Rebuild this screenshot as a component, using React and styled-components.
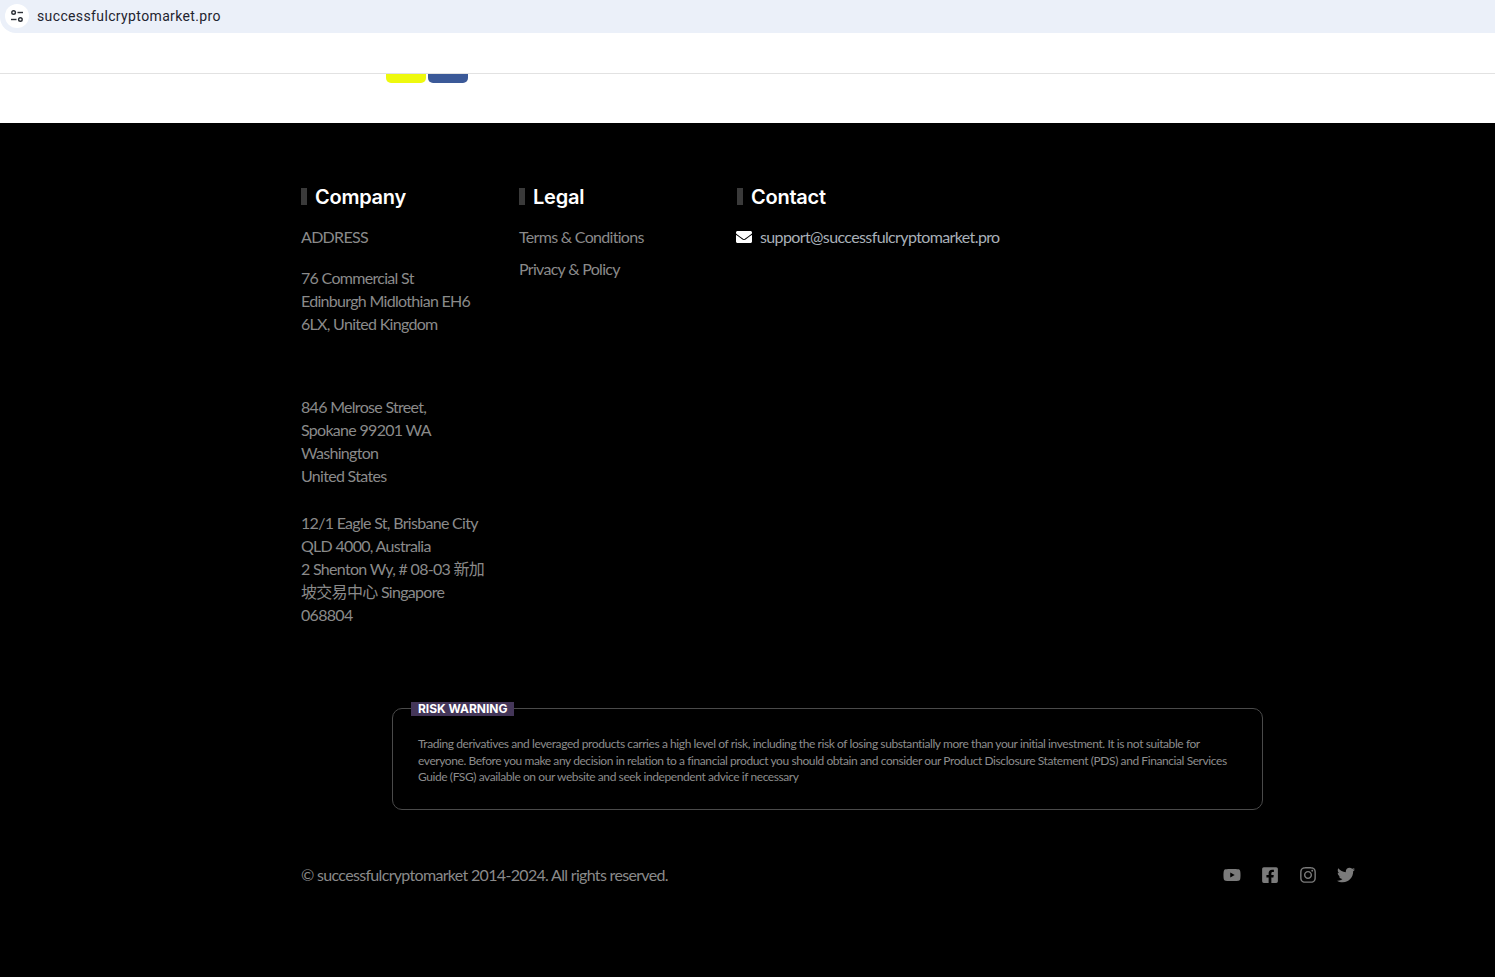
import styled, { createGlobalStyle } from "styled-components"
import { FaEnvelope, FaFacebookSquare, FaInstagram, FaTwitter, FaYoutube } from "react-icons/fa"

const GlobalStyle = createGlobalStyle`
  html, body {
    margin: 0;
    padding: 0;
    background: #fff;
  }
  * {
    box-sizing: border-box;
  }
`
const Page = styled.div`
  min-height: 977px;
  display: flex;
  flex-direction: column;
  font-family: "Lato", "Noto Sans CJK SC", sans-serif;
`
const AddressBar = styled.div`
  height: 33px;
  background: #ebf0f9;
  border-bottom-left-radius: 16px;
  display: flex;
  align-items: center;
  gap: 8px;
  padding: 0 0 2px 5px;
`
const SiteButton = styled.div`
  width: 24px;
  height: 24px;
  border-radius: 50%;
  background: #fff;
  display: flex;
  align-items: center;
  justify-content: center;
`
const Url = styled.span`
  font-family: "Roboto", "Liberation Sans", sans-serif;
  font-size: 14px;
  color: #1f2430;
  letter-spacing: 0.37px;
`
const Header = styled.div`
  height: 41px;
  background: #fff;
  border-bottom: 1px solid #e2e2e2;
`
const Strip = styled.div`
  height: 49px;
  background: #fff;
  display: flex;
  gap: 2px;
  padding-left: 386px;
`
const NavButton = styled.div`
  width: 40px;
  height: 9px;
  border-radius: 0 0 5px 5px;
  background: ${(p) => p.$color};
`
const Footer = styled.footer`
  flex: 1;
  background: #000;
  padding: 62px 0 0 301px;
  display: flex;
  flex-direction: column;
`
const Columns = styled.div`
  display: flex;
`
const Column = styled.div`
  width: 218px;
`
const Heading = styled.h4`
  margin: 0 0 16px;
  height: 24px;
  padding-left: 14px;
  display: flex;
  align-items: center;
  position: relative;
  font-family: "Inter", "Open Sans", sans-serif;
  font-size: 20px;
  font-weight: 600;
  letter-spacing: -0.25px;
  color: #fff;

  &::before {
    content: "";
    position: absolute;
    left: 0;
    top: 3px;
    width: 6px;
    height: 17px;
    background: #3a3a3a;
  }
`
const TextBlock = styled.p`
  margin: 0 0 ${(p) => p.$gap || 0}px;
  font-size: 16px;
  line-height: 23px;
  color: #8a8a8a;
  letter-spacing: -0.7px;
  white-space: nowrap;
`
const FooterLink = styled.a`
  display: block;
  margin-bottom: 9px;
  font-size: 16px;
  line-height: 23px;
  color: #8a8a8a;
  letter-spacing: -0.7px;
`
const MailRow = styled.div`
  display: flex;
  align-items: center;
  gap: 8px;
  height: 23px;
  margin-left: -1px;
  font-size: 16px;
  color: #a9b0b8;
  letter-spacing: -0.62px;
  white-space: nowrap;

  svg {
    flex-shrink: 0;
    color: #fff;
    font-size: 16px;
  }
`
const RiskBox = styled.div`
  position: relative;
  width: 871px;
  height: 102px;
  margin: 82px 0 0 91px;
  border: 1px solid #4a4a4a;
  border-radius: 10px;
  padding: 27px 25px 0;
  font-size: 12px;
  line-height: 16.5px;
  letter-spacing: -0.42px;
  color: #8c8c8c;
`
const RiskLabel = styled.span`
  position: absolute;
  left: 18px;
  top: -7px;
  height: 14px;
  padding: 0 7px;
  background: #443659;
  display: flex;
  align-items: center;
  font-family: "Inter", "Open Sans", sans-serif;
  font-size: 12px;
  font-weight: 700;
  letter-spacing: -0.02px;
  color: #fff;
`
const BottomRow = styled.div`
  margin-top: 53px;
  display: flex;
  align-items: center;
  justify-content: space-between;
  width: 1054px;
`
const Copyright = styled.span`
  font-size: 16px;
  line-height: 23px;
  letter-spacing: -0.68px;
  color: #8a8a8a;
`
const Socials = styled.div`
  display: flex;
  align-items: center;
  gap: 20px;

  svg {
    display: block;
    color: #7b7b7b;
    font-size: 18px;
  }
`

const App = () => {
  return (
    <Page>
      <GlobalStyle />
      <AddressBar>
        <SiteButton>
          <svg width="14" height="14" viewBox="0 0 14 14" fill="none" stroke="#2b2f36" strokeWidth="1.4">
            <circle cx="3.6" cy="3.5" r="1.8" />
            <path d="M7.5 3.5H13" />
            <path d="M1 10.5H6.5" />
            <circle cx="10.4" cy="10.5" r="1.8" />
          </svg>
        </SiteButton>
        <Url>successfulcryptomarket.pro</Url>
      </AddressBar>
      <Header />
      <Strip>
        <NavButton $color="#eef90e" />
        <NavButton $color="#3b5998" />
      </Strip>
      <Footer>
        <Columns>
          <Column>
            <Heading>Company</Heading>
            <TextBlock $gap={18}>ADDRESS</TextBlock>
            <TextBlock $gap={60}>
              76 Commercial St
              <br />
              Edinburgh Midlothian EH6
              <br />
              6LX, United Kingdom
            </TextBlock>
            <TextBlock $gap={24}>
              846 Melrose Street,
              <br />
              Spokane 99201 WA
              <br />
              Washington
              <br />
              United States
            </TextBlock>
            <TextBlock>
              12/1 Eagle St, Brisbane City
              <br />
              QLD 4000, Australia
              <br />
              2 Shenton Wy, # 08-03 新加
              <br />
              坡交易中心 Singapore
              <br />
              068804
            </TextBlock>
          </Column>
          <Column>
            <Heading>Legal</Heading>
            <FooterLink>Terms &amp; Conditions</FooterLink>
            <FooterLink>Privacy &amp; Policy</FooterLink>
          </Column>
          <Column>
            <Heading>Contact</Heading>
            <MailRow>
              <FaEnvelope />
              <span>support@successfulcryptomarket.pro</span>
            </MailRow>
          </Column>
        </Columns>
        <RiskBox>
          <RiskLabel>RISK WARNING</RiskLabel>
          Trading derivatives and leveraged products carries a high level of risk, including the risk of losing substantially more than your initial investment. It is not suitable for everyone. Before you make any decision in relation to a financial product you should obtain and consider our Product Disclosure Statement (PDS) and Financial Services Guide (FSG) available on our website and seek independent advice if necessary
        </RiskBox>
        <BottomRow>
          <Copyright>© successfulcryptomarket 2014-2024. All rights reserved.</Copyright>
          <Socials>
            <FaYoutube />
            <FaFacebookSquare />
            <FaInstagram />
            <FaTwitter />
          </Socials>
        </BottomRow>
      </Footer>
    </Page>
  )
}

export default App
